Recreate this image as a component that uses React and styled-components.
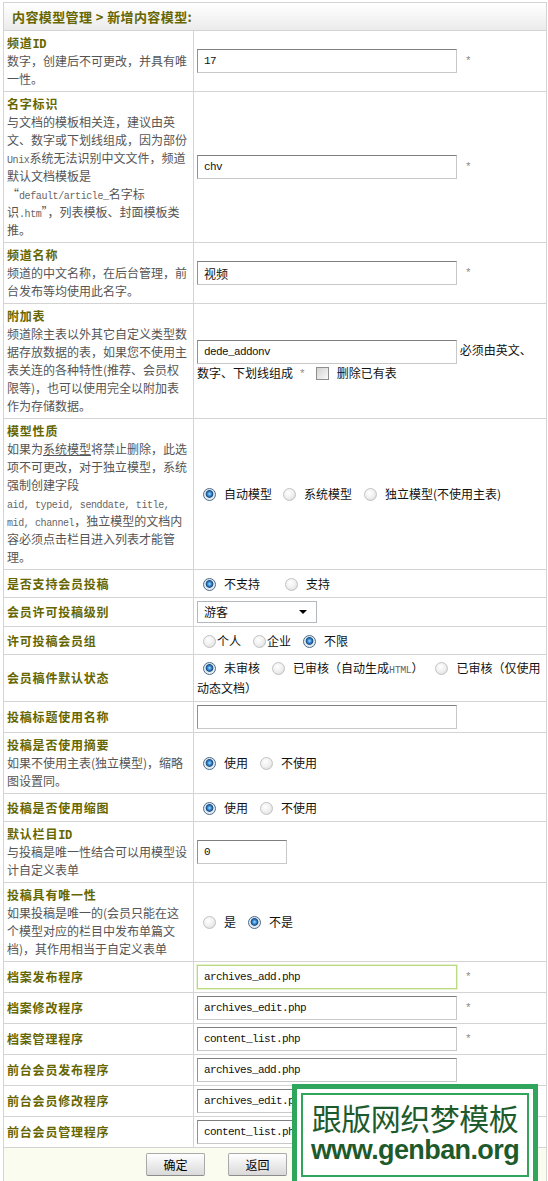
import React from 'react';
import styled, { createGlobalStyle, css } from 'styled-components';

const GlobalStyle = createGlobalStyle`
  html, body {
    margin: 0;
    padding: 0;
    background: #fff;
  }
  body {
    font-family: "Noto Sans CJK SC", "Liberation Sans", sans-serif;
    font-size: 12px;
    color: #000;
  }
`;

const olive = '#666600';
const line = '#d4d4d4';
const green = '#2fa65c';

const Page = styled.div`
  position: relative;
  padding: 2px 1px 0 3px;
`;

const Panel = styled.div`
  display: grid;
  grid-template-columns: 189px 1fr;
  gap: 1px;
  background: ${line};
  border: 1px solid ${line};
`;

const TitleBar = styled.div`
  grid-column: 1 / -1;
  height: 27px;
  display: flex;
  align-items: center;
  padding-left: 8px;
  background: linear-gradient(#ffffff, #ebebeb);
  color: ${olive};
  font-size: 13px;
  font-weight: bold;
  letter-spacing: 0.4px;
`;

const LabelCell = styled.div`
  display: flex;
  flex-direction: column;
  justify-content: center;
  padding: 3px;
  background: #fff;
  line-height: 18px;
`;

const Label = styled.div`
  color: ${olive};
  font-weight: bold;
  letter-spacing: 0.8px;
`;

const LabelCode = styled.span`
  font-family: "Liberation Mono", monospace;
  font-size: 12px;
  line-height: 1;
  letter-spacing: -0.5px;
`;

const Hint = styled.div`
  color: #555;
  white-space: nowrap;
`;

const Code = styled.span`
  font-family: "Liberation Mono", monospace;
  font-size: 10px;
  line-height: 1;
  letter-spacing: -0.4px;
  color: #666;
`;

const FieldCell = styled.div`
  box-sizing: border-box;
  min-height: 27px;
  display: flex;
  align-items: center;
  padding: 3px;
  background: #fff;
`;

const Flow = styled.div`
  width: 100%;
  line-height: ${(p) => p.$lh || 18}px;
  color: #111;
`;

const TextInput = styled.input`
  box-sizing: border-box;
  width: ${(p) => p.$w || 260}px;
  height: 24px;
  margin: 0;
  padding: 0 6px;
  border: 1px solid #c8c8c8;
  border-top-color: #7f7f7f;
  border-left-color: #939393;
  background: #fff;
  font-family: "Liberation Mono", "Noto Sans CJK SC", monospace;
  font-size: 11px;
  letter-spacing: -0.6px;
  color: #111;
  vertical-align: middle;
  outline: none;
  ${(p) =>
    p.$cjk &&
    css`
      font-family: "Noto Sans CJK SC", sans-serif;
      font-size: 12px;
      letter-spacing: 0;
    `}
  ${(p) =>
    p.$focus &&
    css`
      border-color: #b9d983;
      box-shadow: 0 0 0 1px #e6f2d0;
    `}
`;

const Star = styled.span`
  margin-left: ${(p) => p.$ml ?? 8}px;
  color: #8a8a8a;
  font-family: "Liberation Mono", monospace;
  font-size: 11px;
  line-height: 1;
  vertical-align: middle;
`;

const Radio = styled.span`
  display: inline-block;
  box-sizing: border-box;
  width: 13px;
  height: 13px;
  border-radius: 50%;
  vertical-align: -2px;
  margin: 0 ${(p) => (p.$tight ? 1 : 8)}px 0 ${(p) => p.$ml ?? 6}px;
  border: 1px solid ${(p) => (p.$on ? '#4a6a88' : '#c2c2c2')};
  background: ${(p) =>
    p.$on
      ? 'radial-gradient(circle at 50% 45%, #a8e0ff 0, #3b8fd8 22%, #1a4c84 42%, #dfe6ec 52%, #ffffff 100%)'
      : 'radial-gradient(circle at 40% 35%, #ffffff 0, #eeeeee 55%, #d2d2d2 100%)'};
`;

const Check = styled.span`
  display: inline-block;
  box-sizing: border-box;
  width: 13px;
  height: 13px;
  margin: 0 8px 0 10px;
  vertical-align: -2px;
  border: 1px solid #8e8e8e;
  background: linear-gradient(135deg, #d2d2d2, #fafafa);
`;

const Select = styled.div`
  display: inline-flex;
  align-items: center;
  justify-content: space-between;
  box-sizing: border-box;
  width: 120px;
  height: 22px;
  padding: 0 9px 0 6px;
  border: 1px solid #b3b8bd;
  background: #fff;
  vertical-align: middle;
`;

const Caret = styled.span`
  width: 0;
  height: 0;
  border-left: 4px solid transparent;
  border-right: 4px solid transparent;
  border-top: 4px solid #000;
`;

const Footer = styled.div`
  grid-column: 1 / -1;
  height: 33px;
  display: flex;
  align-items: center;
  gap: 23px;
  padding-left: 142px;
  background: #f9fcef;
`;

const Button = styled.button`
  box-sizing: border-box;
  width: 59px;
  height: 23px;
  border: 1px solid #a9a9a9;
  border-bottom-color: #8c8c8c;
  border-radius: 2px;
  background: linear-gradient(#ffffff, #d9d9d9);
  font-family: "Noto Sans CJK SC", sans-serif;
  font-size: 12px;
  color: #000;
  padding: 0;
`;

const Stamp = styled.div`
  position: absolute;
  left: 292px;
  top: 1084px;
  width: 246px;
  height: 102px;
  box-sizing: border-box;
  padding: 4px;
  border: 5px solid ${green};
  background: #fff;
`;

const StampInner = styled.div`
  height: 100%;
  box-sizing: border-box;
  border: 2px solid ${green};
  display: flex;
  flex-direction: column;
  align-items: center;
  justify-content: center;
  color: #1d5a2c;
  padding-bottom: 6px;
`;

const StampTitle = styled.div`
  font-family: "Noto Sans CJK SC", sans-serif;
  font-size: 30px;
  line-height: 36px;
  letter-spacing: -0.5px;
`;

const StampUrl = styled.div`
  font-family: "Liberation Sans", sans-serif;
  font-weight: bold;
  font-size: 27px;
  line-height: 30px;
  letter-spacing: -0.6px;
`;

const FormRow = ({ label, hint, lh, children }) => (
  <>
    <LabelCell>
      <Label>{label}</Label>
      {hint && (
        <Hint>
          {hint.map((l, i) => (
            <div key={i}>{l}</div>
          ))}
        </Hint>
      )}
    </LabelCell>
    <FieldCell>
      <Flow $lh={lh}>{children}</Flow>
    </FieldCell>
  </>
);

const Opt = ({ on, ml, tight, children }) => (
  <>
    <Radio $on={on} $ml={ml} $tight={tight} />
    {children}
  </>
);

const App = () => (
  <Page lang="zh-CN">
    <GlobalStyle />
    <Panel>
      <TitleBar>内容模型管理 &gt; 新增内容模型:</TitleBar>

      <FormRow
        label={<>频道<LabelCode>ID</LabelCode></>}
        hint={['数字，创建后不可更改，并具有唯', '一性。']}
      >
        <TextInput readOnly defaultValue="17" />
        <Star>*</Star>
      </FormRow>

      <FormRow
        label="名字标识"
        hint={[
          '与文档的模板相关连，建议由英',
          '文、数字或下划线组成，因为部份',
          <><Code>Unix</Code>系统无法识别中文文件，频道</>,
          '默认文档模板是',
          <>“<Code>default/article_</Code>名字标</>,
          <>识<Code>.htm</Code>”，列表模板、封面模板类</>,
          '推。',
        ]}
      >
        <TextInput readOnly defaultValue="chv" />
        <Star>*</Star>
      </FormRow>

      <FormRow label="频道名称" hint={['频道的中文名称，在后台管理，前', '台发布等均使用此名字。']}>
        <TextInput readOnly defaultValue="视频" $cjk />
        <Star>*</Star>
      </FormRow>

      <FormRow
        label="附加表"
        hint={[
          '频道除主表以外其它自定义类型数',
          '据存放数据的表，如果您不使用主',
          '表关连的各种特性(推荐、会员权',
          '限等)，也可以使用完全以附加表',
          '作为存储数据。',
        ]}
      >
        <TextInput readOnly defaultValue="dede_addonv" /> 必须由英文、
        <br />
        数字、下划线组成
        <Star $ml={6}>*</Star>
        <Check />删除已有表
      </FormRow>

      <FormRow
        label="模型性质"
        hint={[
          <>如果为<u>系统模型</u>将禁止删除，此选</>,
          '项不可更改，对于独立模型，系统',
          '强制创建字段',
          <Code>aid, typeid, senddate, title,</Code>,
          <><Code>mid, channel</Code>，独立模型的文档内</>,
          '容必须点击栏目进入列表才能管',
          '理。',
        ]}
      >
        <Opt on>自动模型</Opt>
        <Opt ml={11}>系统模型</Opt>
        <Opt ml={12}>独立模型(不使用主表)</Opt>
      </FormRow>

      <FormRow label="是否支持会员投稿">
        <Opt on>不支持</Opt>
        <Opt ml={25}>支持</Opt>
      </FormRow>

      <FormRow label="会员许可投稿级别">
        <Select>
          游客
          <Caret />
        </Select>
      </FormRow>

      <FormRow label="许可投稿会员组">
        <Opt tight>个人</Opt>
        <Opt ml={12} tight>企业</Opt>
        <Opt ml={12} on>不限</Opt>
      </FormRow>

      <FormRow label="会员稿件默认状态" lh={20}>
        <Opt on>未审核</Opt>
        <Opt ml={12}>已审核（自动生成<Code>HTML</Code>）</Opt>
        <Opt ml={12}>已审核（仅使用</Opt>
        <br />
        动态文档）
      </FormRow>

      <FormRow label="投稿标题使用名称">
        <TextInput readOnly defaultValue="" />
      </FormRow>

      <FormRow label="投稿是否使用摘要" hint={['如果不使用主表(独立模型)，缩略', '图设置同。']}>
        <Opt on>使用</Opt>
        <Opt ml={12}>不使用</Opt>
      </FormRow>

      <FormRow label="投稿是否使用缩图">
        <Opt on>使用</Opt>
        <Opt ml={12}>不使用</Opt>
      </FormRow>

      <FormRow
        label={<>默认栏目<LabelCode>ID</LabelCode></>}
        hint={['与投稿是唯一性结合可以用模型设', '计自定义表单']}
      >
        <TextInput readOnly defaultValue="0" $w={90} />
      </FormRow>

      <FormRow
        label="投稿具有唯一性"
        hint={['如果投稿是唯一的(会员只能在这', '个模型对应的栏目中发布单篇文', '档)，其作用相当于自定义表单']}
      >
        <Opt>是</Opt>
        <Opt ml={12} on>不是</Opt>
      </FormRow>

      <FormRow label="档案发布程序">
        <TextInput readOnly defaultValue="archives_add.php" $focus />
        <Star>*</Star>
      </FormRow>

      <FormRow label="档案修改程序">
        <TextInput readOnly defaultValue="archives_edit.php" />
        <Star>*</Star>
      </FormRow>

      <FormRow label="档案管理程序">
        <TextInput readOnly defaultValue="content_list.php" />
        <Star>*</Star>
      </FormRow>

      <FormRow label="前台会员发布程序">
        <TextInput readOnly defaultValue="archives_add.php" />
      </FormRow>

      <FormRow label="前台会员修改程序">
        <TextInput readOnly defaultValue="archives_edit.php" />
      </FormRow>

      <FormRow label="前台会员管理程序">
        <TextInput readOnly defaultValue="content_list.php" />
      </FormRow>

      <Footer>
        <Button type="button">确定</Button>
        <Button type="button">返回</Button>
      </Footer>
    </Panel>

    <Stamp>
      <StampInner>
        <StampTitle>跟版网织梦模板</StampTitle>
        <StampUrl>www.genban.org</StampUrl>
      </StampInner>
    </Stamp>
  </Page>
);

export default App;
